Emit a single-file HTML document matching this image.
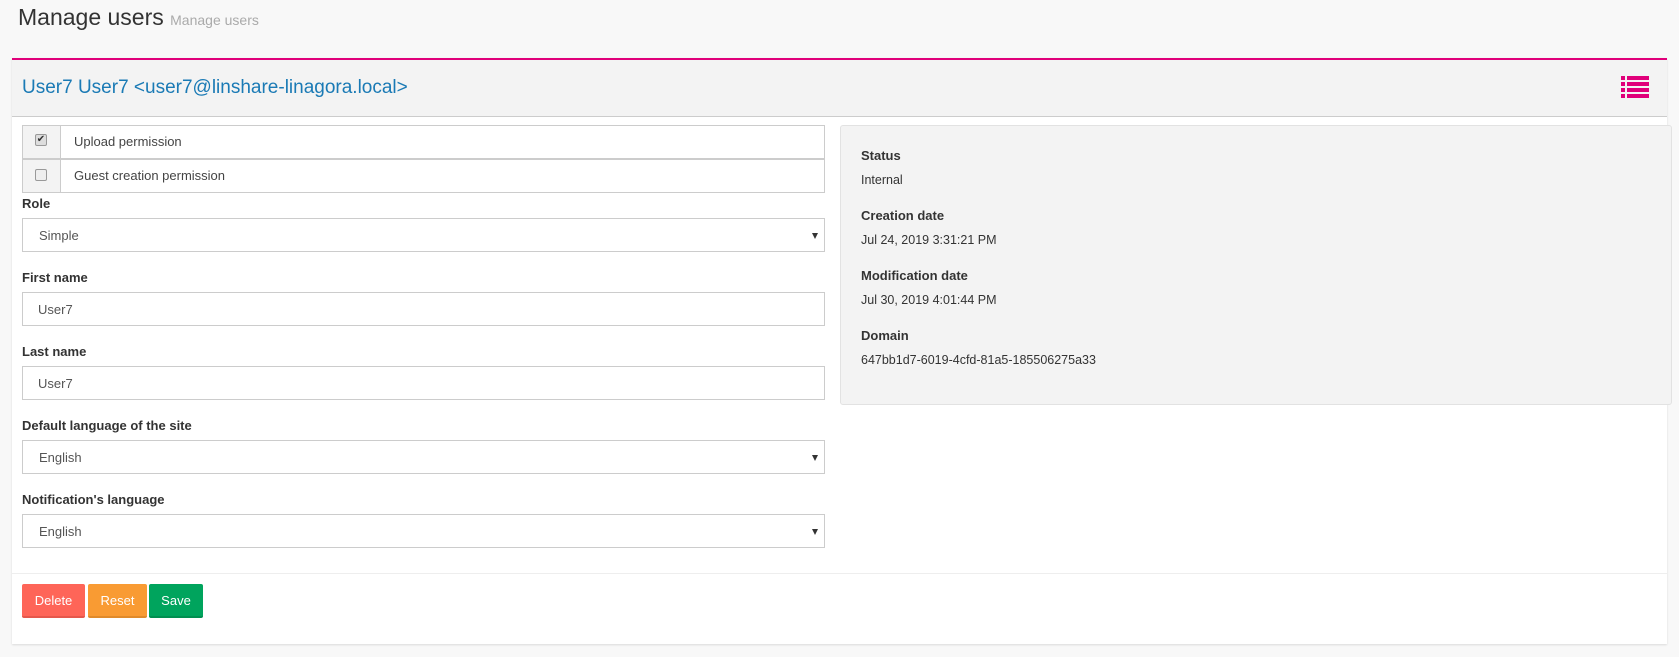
<!DOCTYPE html>
<html><head><meta charset="utf-8"><style>
*{box-sizing:border-box;margin:0;padding:0}
body{width:1679px;height:657px;background:#f8f8f8;font-family:"Liberation Sans",sans-serif;color:#333;position:relative;overflow:hidden}
.a{position:absolute}
.lbl{position:absolute;left:22px;font-size:13px;font-weight:bold;color:#333}
.inp{position:absolute;left:22px;width:803px;height:34px;border:1px solid #ccc;background:#fff;font-size:13px;color:#555;padding:9px 15px;}
.sel{padding-left:16px}
.sel:after{content:"";position:absolute;right:6px;top:14px;border-left:3px solid transparent;border-right:3px solid transparent;border-top:6px solid #333}
.rl{position:absolute;left:20px;font-size:13px;font-weight:bold}
.rv{position:absolute;left:20px;font-size:12.5px}
.btn{position:absolute;top:584px;height:34px;color:#fff;font-size:13px;text-align:center;line-height:34px;border-radius:2px}
</style></head><body>
<div class="a" style="left:18px;top:4px;font-size:23px;color:#333">Manage users <span style="font-size:14px;color:#aaa">Manage users</span></div>
<div class="a" style="left:12px;top:58px;width:1655px;height:586px;background:#fff;border-top:2px solid #e0007a;box-shadow:0 1px 2px rgba(0,0,0,.12)">
 <div class="a" style="left:0;top:0;width:100%;height:57px;background:#f3f3f3;border-bottom:1px solid #ccc"></div>
 <div class="a" style="left:10px;top:17px;font-size:19px;color:#1a7ab5">User7 User7 &lt;user7@linshare-linagora.local&gt;</div>
 <div class="a" style="left:1609px;top:16px;width:28px;height:22px">
  <div class="a" style="left:0;top:0;width:4px;height:4px;background:#e0007a"></div><div class="a" style="left:6px;top:0;width:22px;height:4px;background:#e0007a"></div>
  <div class="a" style="left:0;top:6px;width:4px;height:4px;background:#e0007a"></div><div class="a" style="left:6px;top:6px;width:22px;height:4px;background:#e0007a"></div>
  <div class="a" style="left:0;top:12px;width:4px;height:4px;background:#e0007a"></div><div class="a" style="left:6px;top:12px;width:22px;height:4px;background:#e0007a"></div>
  <div class="a" style="left:0;top:18px;width:4px;height:4px;background:#e0007a"></div><div class="a" style="left:6px;top:18px;width:22px;height:4px;background:#e0007a"></div>
 </div>
 <div class="a" style="left:0;top:513px;width:100%;border-top:1px solid #eee"></div>
</div>
<div class="a" style="left:22px;top:125px;width:803px;height:68px;border:1px solid #ccc;background:#fff">
 <div class="a" style="left:0;top:0;width:38px;height:66px;background:#f3f3f3;border-right:1px solid #ccc"></div>
 <div class="a" style="left:0;top:32px;width:801px;border-top:2px solid #ccc"></div>
 <div class="a" style="left:12px;top:8px;width:12px;height:12px;border:1px solid #999;border-radius:2px;background:#ddd;font-size:10px;line-height:10px;text-align:center">✔</div>
 <div class="a" style="left:12px;top:43px;width:12px;height:12px;border:1px solid #999;border-radius:2px;background:#eee"></div>
 <div class="a" style="left:51px;top:8px;font-size:13px;color:#444">Upload permission</div>
 <div class="a" style="left:51px;top:42px;font-size:13px;color:#444">Guest creation permission</div>
</div>
<div class="lbl" style="top:196px">Role</div>
<div class="inp sel" style="top:218px">Simple</div>
<div class="lbl" style="top:270px">First name</div>
<div class="inp" style="top:292px">User7</div>
<div class="lbl" style="top:344px">Last name</div>
<div class="inp" style="top:366px">User7</div>
<div class="lbl" style="top:418px">Default language of the site</div>
<div class="inp sel" style="top:440px">English</div>
<div class="lbl" style="top:492px">Notification's language</div>
<div class="inp sel" style="top:514px">English</div>
<div class="btn" style="left:22px;width:63px;background:#fe6558;border-bottom:2px solid #e5574b">Delete</div>
<div class="btn" style="left:88px;width:59px;background:#f99b33;border-bottom:2px solid #e08a2a">Reset</div>
<div class="btn" style="left:149px;width:54px;background:#00a45d;border-bottom:2px solid #008f50">Save</div>
<div class="a" style="left:840px;top:125px;width:832px;height:280px;background:#f3f3f3;border:1px solid #e2e2e2;border-radius:3px">
 <div class="rl" style="top:22px">Status</div>
 <div class="rv" style="top:47px">Internal</div>
 <div class="rl" style="top:82px">Creation date</div>
 <div class="rv" style="top:107px">Jul 24, 2019 3:31:21 PM</div>
 <div class="rl" style="top:142px">Modification date</div>
 <div class="rv" style="top:167px">Jul 30, 2019 4:01:44 PM</div>
 <div class="rl" style="top:202px">Domain</div>
 <div class="rv" style="top:227px">647bb1d7-6019-4cfd-81a5-185506275a33</div>
</div>
</body></html>
